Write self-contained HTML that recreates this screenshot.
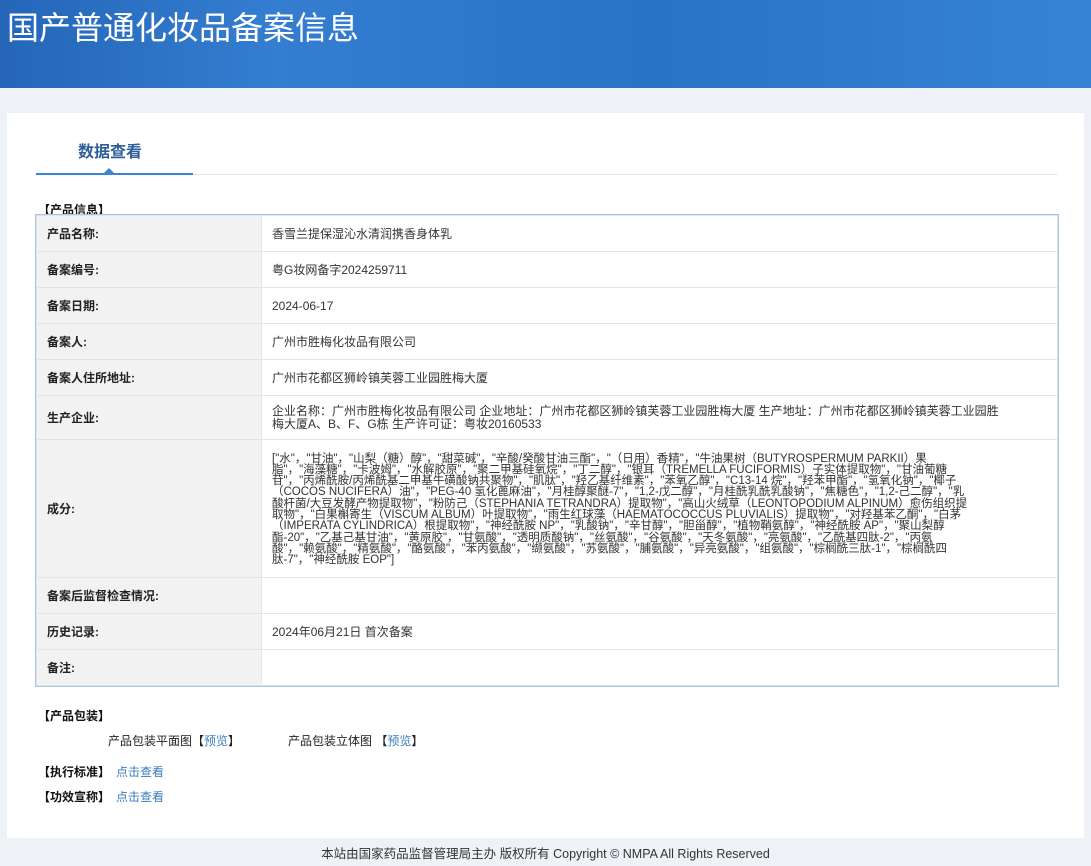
<!DOCTYPE html>
<html><head><meta charset="utf-8"><style>
*{margin:0;padding:0;box-sizing:border-box}
body{width:1091px;height:866px;background:#eef2f6;font-family:"Liberation Sans","Noto Sans CJK SC",sans-serif;color:#333;position:relative;overflow:hidden}
.hd{position:absolute;left:0;top:0;width:1091px;height:88px;background:linear-gradient(90deg,#2566b8 0%,#347dd0 25%,#2a72c6 60%,#3683d6 100%)}
.hd h1{position:absolute;left:7px;top:3px;font-size:32px;font-weight:normal;color:#fff;font-family:"Noto Sans CJK SC",sans-serif}
.card{position:absolute;left:7px;top:113px;width:1077px;height:725px;background:#fff}
.tab{position:absolute;left:78px;top:138px;font-size:16px;font-weight:bold;color:#2d5d9a}
.tl{position:absolute;left:36px;top:174px;width:1022px;height:1px;background:#e3e6ea}
.tb{position:absolute;left:36px;top:173px;width:157px;height:2px;background:#3a86d2}
.tri{position:absolute;left:103px;top:168px;width:0;height:0;border-left:6px solid transparent;border-right:6px solid transparent;border-bottom:6px solid #3a86d2}
.sec{position:absolute;font-size:12px;font-weight:bold;color:#111}
table{position:absolute;left:36px;top:215px;width:1022px;border-collapse:collapse;outline:1px solid #a9c4e3;font-size:12px}
td{border:1px solid #e4e4e4;padding:0 10px;color:#333}
td.l{width:225px;background:#f2f2f2;font-weight:bold;color:#222}
.ing{line-height:11.3px;font-size:11.5px;padding:8px 10px 5px}
.t{position:absolute;font-size:12px;color:#222}
.a,.t.a{color:#3b7dbb}
.ft{position:absolute;top:843px;left:0;width:1091px;text-align:center;font-size:12.5px;color:#333}
</style></head><body>
<div class="hd"><h1>国产普通化妆品备案信息</h1></div>
<div class="card"></div>
<div class="tab">数据查看</div>
<div class="tl"></div><div class="tb"></div><div class="tri"></div>
<div class="sec" style="left:38px;top:201px">【产品信息】</div>
<table>
<tr style="height:36px"><td class="l">产品名称:</td><td>香雪兰提保湿沁水清润携香身体乳</td></tr>
<tr style="height:36px"><td class="l">备案编号:</td><td>粤G妆网备字2024259711</td></tr>
<tr style="height:36px"><td class="l">备案日期:</td><td>2024-06-17</td></tr>
<tr style="height:36px"><td class="l">备案人:</td><td>广州市胜梅化妆品有限公司</td></tr>
<tr style="height:36px"><td class="l">备案人住所地址:</td><td>广州市花都区狮岭镇芙蓉工业园胜梅大厦</td></tr>
<tr style="height:44px"><td class="l">生产企业:</td><td style="line-height:13px">企业名称：广州市胜梅化妆品有限公司 企业地址：广州市花都区狮岭镇芙蓉工业园胜梅大厦 生产地址：广州市花都区狮岭镇芙蓉工业园胜<br>梅大厦A、B、F、G栋 生产许可证：粤妆20160533</td></tr>
<tr style="height:138px"><td class="l">成分:</td><td class="ing">["水"，"甘油"，"山梨（糖）醇"，"甜菜碱"，"辛酸/癸酸甘油三酯"，"（日用）香精"，"牛油果树（BUTYROSPERMUM PARKII）果<br>脂"，"海藻糖"，"卡波姆"，"水解胶原"，"聚二甲基硅氧烷"，"丁二醇"，"银耳（TREMELLA FUCIFORMIS）子实体提取物"，"甘油葡糖<br>苷"，"丙烯酰胺/丙烯酰基二甲基牛磺酸钠共聚物"，"肌肽"，"羟乙基纤维素"，"苯氧乙醇"，"C13-14 烷"，"羟苯甲酯"，"氢氧化钠"，"椰子<br>（COCOS NUCIFERA）油"，"PEG-40 氢化蓖麻油"，"月桂醇聚醚-7"，"1,2-戊二醇"，"月桂酰乳酰乳酸钠"，"焦糖色"，"1,2-己二醇"，"乳<br>酸杆菌/大豆发酵产物提取物"，"粉防己（STEPHANIA TETRANDRA）提取物"，"高山火绒草（LEONTOPODIUM ALPINUM）愈伤组织提<br>取物"，"白果槲寄生（VISCUM ALBUM）叶提取物"，"雨生红球藻（HAEMATOCOCCUS PLUVIALIS）提取物"，"对羟基苯乙酮"，"白茅<br>（IMPERATA CYLINDRICA）根提取物"，"神经酰胺 NP"，"乳酸钠"，"辛甘醇"，"胆甾醇"，"植物鞘氨醇"，"神经酰胺 AP"，"聚山梨醇<br>酯-20"，"乙基己基甘油"，"黄原胶"，"甘氨酸"，"透明质酸钠"，"丝氨酸"，"谷氨酸"，"天冬氨酸"，"亮氨酸"，"乙酰基四肽-2"，"丙氨<br>酸"，"赖氨酸"，"精氨酸"，"酪氨酸"，"苯丙氨酸"，"缬氨酸"，"苏氨酸"，"脯氨酸"，"异亮氨酸"，"组氨酸"，"棕榈酰三肽-1"，"棕榈酰四<br>肽-7"，"神经酰胺 EOP"]</td></tr>
<tr style="height:36px"><td class="l">备案后监督检查情况:</td><td></td></tr>
<tr style="height:36px"><td class="l">历史记录:</td><td>2024年06月21日 首次备案</td></tr>
<tr style="height:36px"><td class="l">备注:</td><td></td></tr>
</table>
<div class="sec" style="left:38px;top:707px">【产品包装】</div>
<div class="t" style="left:108px;top:732px">产品包装平面图【<span class="a">预览</span>】</div>
<div class="t" style="left:288px;top:732px">产品包装立体图 【<span class="a">预览</span>】</div>
<div class="sec" style="left:38px;top:763px">【执行标准】</div><div class="t a" style="left:116px;top:763px">点击查看</div>
<div class="sec" style="left:38px;top:788px">【功效宣称】</div><div class="t a" style="left:116px;top:788px">点击查看</div>
<div class="ft">本站由国家药品监督管理局主办 版权所有 Copyright © NMPA All Rights Reserved</div>
</body></html>
